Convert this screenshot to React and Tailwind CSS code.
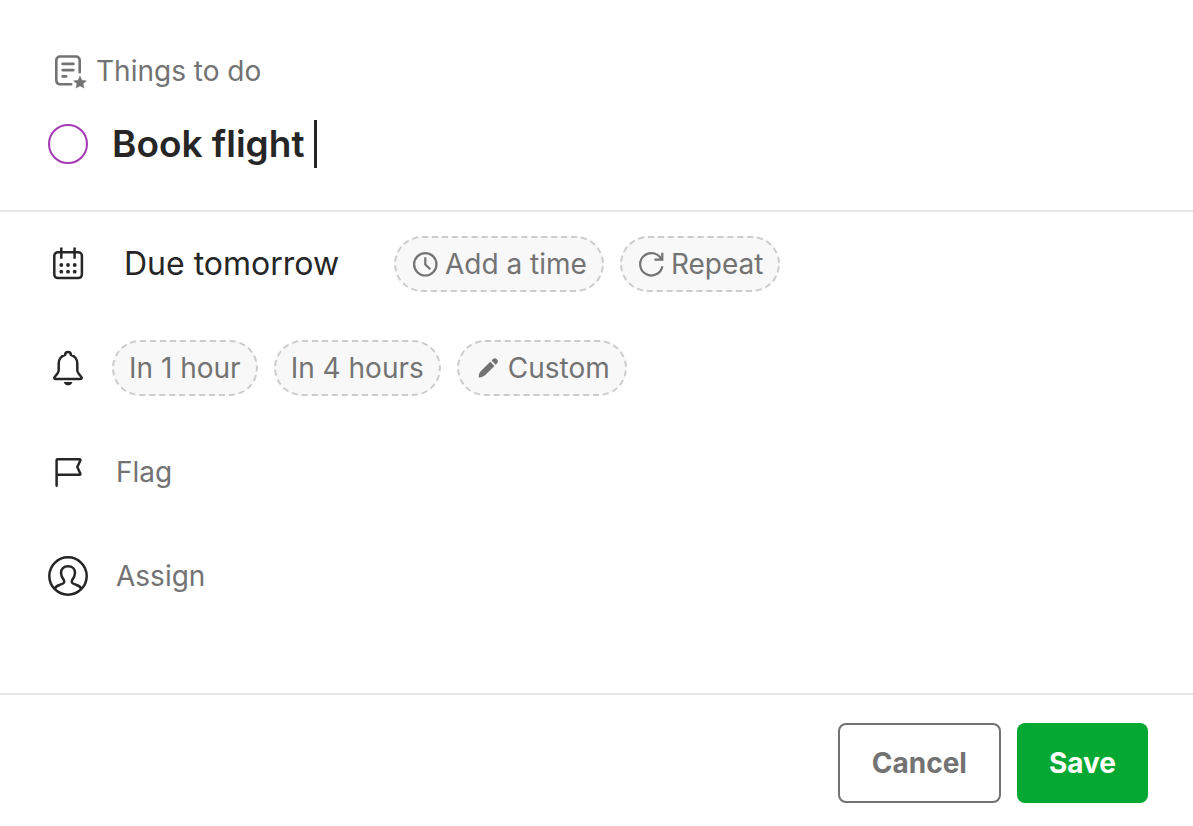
import React, { useState } from 'react';

const NoteStarIcon = () => (
  <svg viewBox="0 0 40 40" className="w-10 h-10 shrink-0" fill="none" stroke="currentColor" strokeWidth="2.6" strokeLinecap="round" aria-hidden="true">
    <path d="M23.2 33.3H12a3.7 3.7 0 0 1-3.7-3.7V9.2A3.7 3.7 0 0 1 12 5.5h16a3.7 3.7 0 0 1 3.7 3.7v12" />
    <path d="M14.6 12.9h10.8M14.6 19.1h10.8M14.6 25.4h3.6" />
    <path
      d="M32 25l1.9 4.2 4.5.5-3.3 3 .9 4.4-4-2.2-4 2.2.9-4.4-3.3-3 4.5-.5z"
      fill="currentColor"
      strokeWidth="0.4"
      strokeLinejoin="round"
    />
  </svg>
);

const CalendarIcon = () => (
  <svg viewBox="0 0 40 40" className="w-10 h-10 shrink-0" fill="none" stroke="currentColor" strokeWidth="2.5" aria-hidden="true">
    <path d="M13.3 3.6v11.2M26.6 3.6v11.2" />
    <path d="M9.8 8.3A3.5 3.5 0 0 0 6.3 11.8v18.8a3.5 3.5 0 0 0 3.5 3.5h20.6a3.5 3.5 0 0 0 3.5-3.5V11.8a3.5 3.5 0 0 0-3.5-3.5z" />
    <g fill="currentColor" stroke="none">
      <circle cx="13.3" cy="21" r="1.9" />
      <circle cx="20" cy="21" r="1.9" />
      <circle cx="26.7" cy="21" r="1.9" />
      <circle cx="13.3" cy="27.7" r="1.9" />
      <circle cx="20" cy="27.7" r="1.9" />
      <circle cx="26.7" cy="27.7" r="1.9" />
    </g>
  </svg>
);

const BellIcon = () => (
  <svg viewBox="0 0 40 40" className="w-10 h-10 shrink-0" fill="none" stroke="currentColor" strokeWidth="2.5" strokeLinejoin="round" aria-hidden="true">
    <path d="M17.1 6.9C17.1 5 18.4 3.9 20 3.9s2.9 1.1 2.9 3c3.9 1.3 6.4 4.5 6.4 8.6v6.6c0 1.6.5 2.6 1.4 3.7l2.5 3c1 1.2.4 2.2-1 2.2H7.8c-1.4 0-2-1-1-2.2l2.5-3c.9-1.1 1.4-2.1 1.4-3.7v-6.6c0-4.1 2.5-7.3 6.4-8.6z" />
    <path d="M15.8 33.9h8.6c-.6 2.2-2.2 3.4-4.3 3.4s-3.7-1.2-4.3-3.4z" fill="currentColor" stroke="none" />
  </svg>
);

const FlagIcon = () => (
  <svg viewBox="0 0 40 40" className="w-10 h-10 shrink-0" fill="none" stroke="currentColor" strokeWidth="2.5" strokeLinecap="round" strokeLinejoin="round" aria-hidden="true">
    <path d="M8.6 33.8V8.2a.9.9 0 0 1 .9-.9h22.1c.7 0 1 .5.7 1.1L29.3 15l3 6.6c.3.6 0 1.1-.7 1.1h-23" />
  </svg>
);

const AssignIcon = () => (
  <svg viewBox="0 0 40 40" className="w-10 h-10 shrink-0" fill="none" stroke="currentColor" strokeWidth="2.5" strokeLinejoin="round" aria-hidden="true">
    <circle cx="20" cy="20" r="18.7" />
    <path d="M6.7 32.6c1-2 2.8-3.1 5.3-3.9l2.2-.8c2-.7 2.5-2 1.6-3.9C14 21.4 13 19.3 13 17c0-4.1 2.7-6.7 7-6.7s7 2.6 7 6.7c0 2.3-1 4.4-2.8 7-.9 1.900-.4 3.200 1.600 3.900l2.200.8c2.500.8 4.300 1.900 5.300 3.900" />
  </svg>
);

const ClockIcon = () => (
  <svg viewBox="0 0 28 28" className="w-7 h-7 shrink-0" fill="none" stroke="currentColor" strokeWidth="2.2" aria-hidden="true">
    <circle cx="14.3" cy="14.3" r="11.2" />
    <path d="M14.3 7.3v7.2l5 4.8" />
  </svg>
);

const RepeatIcon = () => (
  <svg viewBox="0 0 28 28" className="w-7 h-7 shrink-0" fill="none" stroke="currentColor" strokeWidth="2.2" aria-hidden="true">
    <path d="M25.4 16.2A11.2 11.2 0 1 1 24.6 9.7" />
    <path d="M25.3 2.8v6.9h-7.8" />
  </svg>
);

const PencilIcon = () => (
  <svg viewBox="0 0 28 28" className="w-7 h-7 shrink-0" fill="currentColor" aria-hidden="true">
    <path d="M16.3 7.7l4.2 4.2-9.4 9.4c-1.5 1.3-3.6 2-5.8 2.1-.4 0-.6-.2-.6-.6.1-2.2.8-4.3 2.2-5.7z" />
    <path d="M17.5 6.5l1.2-1.2a2.97 2.97 0 0 1 4.2 4.2l-1.2 1.2z" />
  </svg>
);

const Chip = ({ icon, children }) => (
  <button
    type="button"
    className="flex h-14 items-center gap-1.5 whitespace-nowrap rounded-full border-2 border-dashed border-[#cccccc] bg-[#f8f8f8] px-[15px] text-[28px] text-[#737373]"
  >
    {icon}
    {children}
  </button>
);

export default function App() {
  const [title, setTitle] = useState('Book flight ');
  const [done, setDone] = useState(false);

  return (
    <form
      className="flex min-h-screen flex-col bg-white font-['Inter',sans-serif] text-[#262626]"
      onSubmit={(e) => e.preventDefault()}
    >
      <header className="border-b-2 border-[#e6e6e6] px-12 pt-[51px] pb-[42px]">
        <a href="#note" className="inline-flex h-10 items-center gap-2 align-top text-[28px] text-[#737373]">
          <NoteStarIcon />
          Things to do
        </a>
        <div className="mt-[29px] flex h-12 items-center">
          <input
            type="checkbox"
            aria-label="Mark as done"
            checked={done}
            onChange={(e) => setDone(e.target.checked)}
            className="h-10 w-10 shrink-0 appearance-none rounded-full border-2 border-[#a33bb3] checked:bg-[#a33bb3]"
          />
          <input
            type="text"
            aria-label="Task title"
            value={title}
            onChange={(e) => setTitle(e.target.value)}
            className="ml-6 h-12 field-sizing-content text-[37px] leading-[48px] font-semibold outline-none"
          />
          <span className="h-12 w-[3px] bg-[#262626]" />
        </div>
      </header>

      <main className="flex flex-1 flex-col gap-12 px-12 py-6">
        <div className="flex h-14 items-center gap-6">
          <CalendarIcon />
          <button type="button" className="w-[258px] whitespace-nowrap pl-3 text-left text-[32px]">
            Due tomorrow
          </button>
          <div className="flex gap-4">
            <Chip icon={<ClockIcon />}>Add a time</Chip>
            <Chip icon={<RepeatIcon />}>Repeat</Chip>
          </div>
        </div>
        <div className="flex h-14 items-center gap-6">
          <BellIcon />
          <div className="flex gap-4">
            <Chip>In 1 hour</Chip>
            <Chip>In 4 hours</Chip>
            <Chip icon={<PencilIcon />}>Custom</Chip>
          </div>
        </div>
        <button type="button" className="flex h-14 items-center gap-7 text-[28px] text-[#737373]">
          <span className="text-[#262626]"><FlagIcon /></span>
          Flag
        </button>
        <button type="button" className="flex h-14 items-center gap-7 text-[28px] text-[#737373]">
          <span className="text-[#262626]"><AssignIcon /></span>
          Assign
        </button>
      </main>

      <footer className="flex justify-end gap-4 border-t-2 border-[#e6e6e6] pt-7 pr-[45px] pb-[23px]">
        <button type="button" className="h-20 rounded-lg border-2 border-[#737373] px-8 text-[28px] font-bold text-[#737373]">
          Cancel
        </button>
        <button type="submit" className="h-20 rounded-lg bg-[#05a832] px-8 text-[28px] font-bold text-white">
          Save
        </button>
      </footer>
    </form>
  );
}
